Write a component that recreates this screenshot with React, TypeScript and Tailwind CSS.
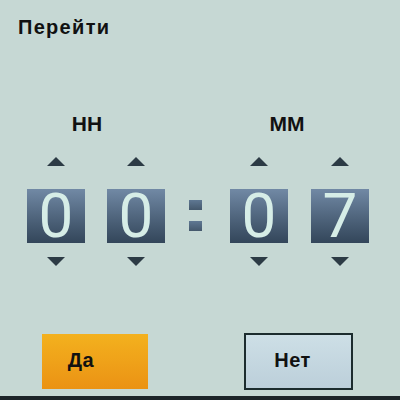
import React from "react";

const Up = () => (
  <svg width="18" height="9" viewBox="0 0 18 9" className="block">
    <polygon points="9,0 18,9 0,9" fill="#2c3b45" />
  </svg>
);
const Down = () => (
  <svg width="18" height="9" viewBox="0 0 18 9" className="block">
    <polygon points="0,0 18,0 9,9" fill="#2c3b45" />
  </svg>
);

const Digit = ({ d }: { d: string }) => (
  <div className="flex w-[58px] flex-col items-center">
    <Up />
    <div
      className="mt-[23px] flex h-[54px] w-[58px] items-center justify-center bg-gradient-to-b from-[#7189a5] to-[#33465a] text-[62px] leading-none text-[#d6ede7]"
      style={{ fontFamily: "Roboto, 'Liberation Sans', sans-serif", fontWeight: 400 }}
    >
      {d}
    </div>
    <div className="mt-[14px]">
      <Down />
    </div>
  </div>
);

export default function App() {
  return (
    <div
      className="flex h-[400px] w-[400px] flex-col bg-[#c6d8d4] text-[#111]"
      style={{ fontFamily: "'Liberation Sans', Arial, sans-serif" }}
    >
      <div className="pl-[18px] pt-[16px] text-[20px] font-bold leading-[22px] tracking-[1.3px]">
        Перейти
      </div>

      <div className="mt-[74px] flex pl-[37px] text-[21px] font-bold leading-[24px]">
        <div className="w-[100px] text-center">HH</div>
        <div className="ml-[100px] w-[100px] text-center">MM</div>
      </div>

      <div className="mt-[21px] flex pl-[27px]">
        <Digit d="0" />
        <div className="ml-[22px]">
          <Digit d="0" />
        </div>
        <div className="ml-[24px] flex w-[13px] flex-col pt-[43px]">
          <div className="h-[10px] w-[13px] bg-gradient-to-b from-[#5f7893] to-[#44586c]" />
          <div className="mt-[11px] h-[10px] w-[13px] bg-gradient-to-b from-[#5f7893] to-[#44586c]" />
        </div>
        <div className="ml-[28px]">
          <Digit d="0" />
        </div>
        <div className="ml-[23px]">
          <Digit d="7" />
        </div>
      </div>

      <div className="mt-[67px] flex items-start pl-[42px] text-[20px] font-bold tracking-[0.5px]">
        <div className="mt-[1px] flex h-[55px] w-[106px] items-center justify-center bg-gradient-to-b from-[#f3b11e] to-[#eb9214] pb-[4px] pr-[28px]">
          Да
        </div>
        <div className="ml-[96px] flex h-[57px] w-[109px] items-center justify-center border-2 border-[#1c2c2e] bg-gradient-to-b from-[#cddfe6] to-[#bccfda] pb-[4px] pr-[12px]">
          Нет
        </div>
      </div>

      <div className="mt-auto h-[4px] bg-[#1c2428]" />
    </div>
  );
}
